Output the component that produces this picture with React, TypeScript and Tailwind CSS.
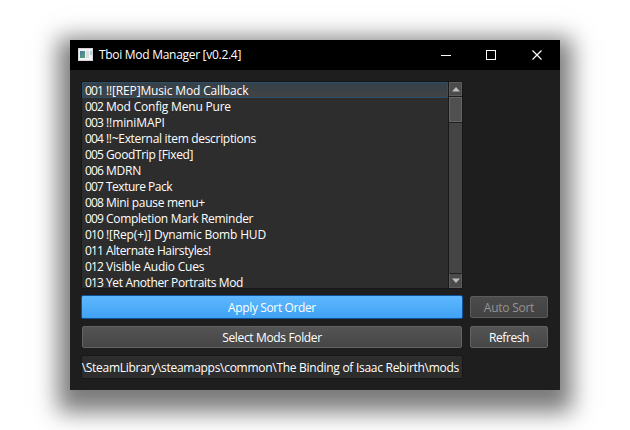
import React from "react";

const mods: { name: string; spacing: string }[] = [
  { name: "!![REP]Music Mod Callback", spacing: "tracking-[-0.15px]" },
  { name: "Mod Config Menu Pure", spacing: "tracking-[-0.2px]" },
  { name: "!!miniMAPI", spacing: "tracking-[-0.1px]" },
  { name: "!!~External item descriptions", spacing: "tracking-[-0.31px]" },
  { name: "GoodTrip [Fixed]", spacing: "tracking-[-0.37px]" },
  { name: "MDRN", spacing: "tracking-[-0.25px]" },
  { name: "Texture Pack", spacing: "tracking-[-0.5px]" },
  { name: "Mini pause menu+", spacing: "tracking-[-0.3px]" },
  { name: "Completion Mark Reminder", spacing: "tracking-[-0.3px]" },
  { name: "![Rep(+)] Dynamic Bomb HUD", spacing: "tracking-[-0.16px]" },
  { name: "Alternate Hairstyles!", spacing: "tracking-[-0.38px]" },
  { name: "Visible Audio Cues", spacing: "tracking-[-0.22px]" },
  { name: "Yet Another Portraits Mod", spacing: "tracking-[-0.36px]" },
];

function AppIcon() {
  return (
    <svg width="15" height="13" viewBox="0 0 15 13" className="mb-[2px]" shapeRendering="crispEdges">
      <defs>
        <linearGradient id="pane" x1="0" y1="0" x2="1" y2="1">
          <stop offset="0" stopColor="#4a78a8" />
          <stop offset="1" stopColor="#57a870" />
        </linearGradient>
      </defs>
      <rect width="15" height="13" fill="#d4d4d8" />
      <rect x="1" y="1" width="13" height="11" fill="#f2f2f4" />
      <rect x="2" y="3" width="5" height="7" fill="url(#pane)" />
      <rect x="8" y="3" width="3" height="7" fill="#dcdce2" />
      <rect x="12" y="3" width="2" height="4" fill="#a9d3c4" />
    </svg>
  );
}

function TitleBar() {
  return (
    <header className="flex h-[30px] items-center bg-black pl-2 text-white">
      <AppIcon />
      <span className="ml-[6px] flex-1 tracking-[-0.29px] whitespace-pre">Tboi Mod Manager [v0.2.4]</span>
      <svg width="104" height="12" viewBox="0 0 104 12" className="mr-[16px] mb-px" fill="none" stroke="#fff">
        <path d="M1 6.5h10" />
        <rect x="46.5" y="1.5" width="9" height="9" />
        <path d="M92.5 1.5l9 9M101.5 1.5l-9 9" strokeWidth="1.2" />
      </svg>
    </header>
  );
}

function ScrollBar() {
  return (
    <div className="flex w-[14px] flex-col border-l border-[#191919] bg-[#444]">
      <div className="flex h-[14px] items-center justify-center border border-[#5c5c5c] bg-[#4b4b4b]">
        <svg width="8" height="5" viewBox="0 0 8 5">
          <path d="M0 4.5L4 0L8 4.5z" fill="#bdbdbd" />
        </svg>
      </div>
      <div className="h-[27px] border-y border-[#1f1f1f]">
        <div className="h-full border border-[#666] bg-[#505050]" />
      </div>
      <div className="flex-1" />
      <div className="flex h-[15px] items-center justify-center border border-t-[#1f1f1f] border-[#5c5c5c] bg-[#4b4b4b]">
        <svg width="8" height="5" viewBox="0 0 8 5">
          <path d="M0 .5L4 5L8 .5z" fill="#bdbdbd" />
        </svg>
      </div>
    </div>
  );
}

export default function App() {
  return (
    <div className="h-[430px] w-[630px] overflow-hidden bg-white pt-[40px] pl-[70px] font-['Open_Sans','Noto_Sans',sans-serif] text-[12px] leading-[16px] text-white">
      <div className="h-[350px] w-[490px] bg-[#1e1e1e] shadow-[0_10px_22px_12px_rgba(0,0,0,0.52)]">
        <TitleBar />
        <main className="pt-[11px] pl-[11px]">
          <div className="flex h-[208px] w-[382px] overflow-hidden border border-[#171717] bg-[#2d2d2d]">
            <ul className="flex-1 leading-[10px]">
              {mods.map((mod, i) => (
                <li
                  key={mod.name}
                  className={
                    "flex h-[16px] items-center border pt-[2px] pl-[2px] whitespace-pre " +
                    (i === 0
                      ? "rounded-[1px] border-[#2c506c] bg-linear-to-b from-[#35414a] to-[#424344]"
                      : "border-transparent")
                  }
                >
                  <span className="w-[21px] tracking-[-0.8px]">{String(i + 1).padStart(3, "0")}</span>
                  <span className={mod.spacing}>{mod.name}</span>
                </li>
              ))}
            </ul>
            <ScrollBar />
          </div>
          <div className="mt-[6px] flex gap-[7px]">
            <button className="h-[24px] w-[382px] rounded-[2px] border border-[#0f549a] bg-linear-to-b from-[#5fb8ff] to-[#3fa2f3] pt-[2px] tracking-[-0.37px]">
              <span>Apply Sort Order</span>
            </button>
            <button className="mt-px h-[22px] w-[78px] rounded-[2px] border border-[#5c5c5c] bg-linear-to-b from-[#4b4b4b] to-[#424242] pt-[2px] tracking-[-0.25px] text-[#949494]">
              <span>Auto Sort</span>
            </button>
          </div>
          <div className="mt-[7px] ml-px flex gap-[8px]">
            <button className="h-[22px] w-[380px] rounded-[2px] border border-[#626262] bg-linear-to-b from-[#545454] to-[#464646] pt-[2px] tracking-[-0.35px]">
              <span>Select Mods Folder</span>
            </button>
            <button className="h-[22px] w-[78px] rounded-[2px] border border-[#626262] bg-linear-to-b from-[#545454] to-[#464646] pt-[2px] tracking-[-0.45px]">
              <span>Refresh</span>
            </button>
          </div>
          <div className="mt-[7px] flex h-[24px] w-[382px] items-center justify-end rounded-[2px] border border-[#171717] bg-[#2d2d2d] pt-[2px] pr-[3px] whitespace-pre">
            <span className="tracking-[-0.28px]">{"\\SteamLibrary\\steamapps\\common\\The Binding of Isaac Rebirth\\mods"}</span>
          </div>
        </main>
      </div>
    </div>
  );
}
